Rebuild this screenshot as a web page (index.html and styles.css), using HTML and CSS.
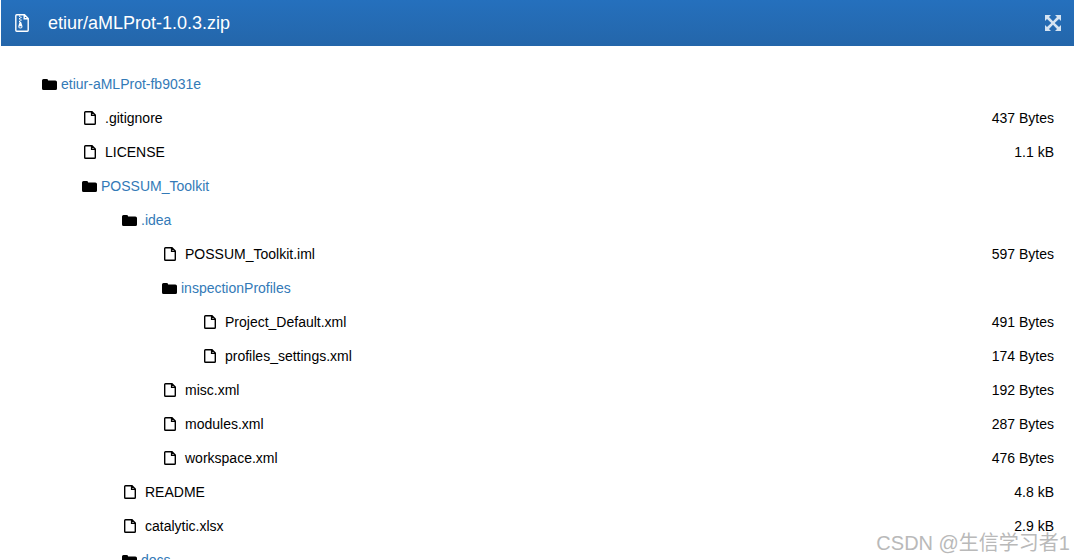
FILE: index.html
```
<!DOCTYPE html>
<html lang="en">
<head>
  <meta charset="UTF-8">
  <title>etiur/aMLProt-1.0.3.zip</title>
  <link rel="stylesheet" href="styles.css">
</head>
<body>

  <!-- ICONS -->
  <svg class="sprite" aria-hidden="true">
    <symbol id="icon-folder" viewBox="0 0 15 11">
      <path d="M0 1.500Q0 0 1.500 0H4.500Q6 0 6.200 1.400H13.300Q15 1.400 15 3V9.500Q15 11 13.500 11H1.500Q0 11 0 9.500Z" fill="currentColor"/>
    </symbol>
    <symbol id="icon-file" viewBox="0 0 12 14">
      <path d="M1.500 .7H8L11.300 4V12.500Q11.300 13.300 10.500 13.300H1.500Q.7 13.300 .7 12.500V1.500Q.7 .7 1.500 .7ZM7.600 1V4.400H11" fill="none" stroke="currentColor" stroke-width="1.400"/>
    </symbol>
    <symbol id="icon-zip" viewBox="0 0 14 18">
      <path d="M1.700 .8H9.500L13.200 4.500V16.300Q13.200 17.200 12.300 17.200H1.700Q.8 17.200 .8 16.300V1.700Q.8 .8 1.700 .8ZM9.200 1V4.800H13" fill="none" stroke="currentColor" stroke-width="1.400"/>
      <path d="M4 1.500H5.300V2.800H4ZM5.300 2.800H6.600V4.100H5.300ZM4 4.100H5.300V5.400H4ZM5.300 5.400H6.600V6.700H5.300ZM4 6.700H5.300V8H4Z" fill="currentColor"/>
      <path fill-rule="evenodd" d="M4.600 8H6.100L7.500 12.300Q7.700 14.600 5.400 14.600Q3.100 14.600 3.300 12.300ZM4.400 12.300V13.400H6.400V12.300Z" fill="currentColor"/>
    </symbol>
    <symbol id="icon-expand" viewBox="0 0 16 16">
      <path d="M0 0H6L4 2L8 6.300L12 2L10 0H16V6L14 4L9.700 8L14 12L16 10V16H10L12 14L8 9.700L4 14L6 16H0V10L2 12L6.300 8L2 4L0 6Z" fill="currentColor"/>
    </symbol>
  </svg>

  <header class="header">
    <svg class="zip-icon"><use href="#icon-zip"/></svg>
    <h1>etiur/aMLProt-1.0.3.zip</h1>
    <button class="expand-btn" type="button" aria-label="Fullscreen">
      <svg><use href="#icon-expand"/></svg>
    </button>
  </header>

  <!-- FILE TREE -->
  <main class="preview">
    <ul class="tree">
      <li>
        <div class="row"><svg class="folder-icon"><use href="#icon-folder"/></svg><a href="#">etiur-aMLProt-fb9031e</a></div>
        <ul>
          <li><div class="row"><svg class="file-icon"><use href="#icon-file"/></svg><span>.gitignore</span><span class="size">437 Bytes</span></div></li>
          <li><div class="row"><svg class="file-icon"><use href="#icon-file"/></svg><span>LICENSE</span><span class="size">1.1 kB</span></div></li>
          <li>
            <div class="row"><svg class="folder-icon"><use href="#icon-folder"/></svg><a href="#">POSSUM_Toolkit</a></div>
            <ul>
              <li>
                <div class="row"><svg class="folder-icon"><use href="#icon-folder"/></svg><a href="#">.idea</a></div>
                <ul>
                  <li><div class="row"><svg class="file-icon"><use href="#icon-file"/></svg><span>POSSUM_Toolkit.iml</span><span class="size">597 Bytes</span></div></li>
                  <li>
                    <div class="row"><svg class="folder-icon"><use href="#icon-folder"/></svg><a href="#">inspectionProfiles</a></div>
                    <ul>
                      <li><div class="row"><svg class="file-icon"><use href="#icon-file"/></svg><span>Project_Default.xml</span><span class="size">491 Bytes</span></div></li>
                      <li><div class="row"><svg class="file-icon"><use href="#icon-file"/></svg><span>profiles_settings.xml</span><span class="size">174 Bytes</span></div></li>
                    </ul>
                  </li>
                  <li><div class="row"><svg class="file-icon"><use href="#icon-file"/></svg><span>misc.xml</span><span class="size">192 Bytes</span></div></li>
                  <li><div class="row"><svg class="file-icon"><use href="#icon-file"/></svg><span>modules.xml</span><span class="size">287 Bytes</span></div></li>
                  <li><div class="row"><svg class="file-icon"><use href="#icon-file"/></svg><span>workspace.xml</span><span class="size">476 Bytes</span></div></li>
                </ul>
              </li>
              <li><div class="row"><svg class="file-icon"><use href="#icon-file"/></svg><span>README</span><span class="size">4.8 kB</span></div></li>
              <li><div class="row"><svg class="file-icon"><use href="#icon-file"/></svg><span>catalytic.xlsx</span><span class="size">2.9 kB</span></div></li>
              <li>
                <div class="row"><svg class="folder-icon"><use href="#icon-folder"/></svg><a href="#">docs</a></div>
              </li>
            </ul>
          </li>
        </ul>
      </li>
    </ul>
  </main>

  <div class="watermark">CSDN @生信学习者1</div>

</body>
</html>
```
FILE: styles.css
```
body {
  font-family: "Liberation Sans", Arial, "Noto Sans CJK SC", sans-serif;
  font-size: 14px;
  color: #000;
  background: #fff;
  margin: 0;
  height: 100vh;
  overflow: hidden;
}

.sprite {
  display: none;
}

.header {
  display: flex;
  align-items: center;
  height: 46px;
  margin-left: 1px;
  padding: 0 13px 0 14px;
  box-sizing: border-box;
  background: linear-gradient(#2570bd, #2466aa);
  color: #fff;
}

.header h1 {
  flex: 1;
  margin: 0 0 0 19px;
  font-size: 18px;
  font-weight: 400;
}

.zip-icon {
  width: 14px;
  height: 18px;
}

.expand-btn {
  display: flex;
  padding: 0;
  border: none;
  background: none;
  color: #d5e3f1;
  cursor: pointer;
}

.expand-btn svg {
  width: 16px;
  height: 16px;
}

.preview {
  padding: 21px 20px 0 2px;
}

.tree,
.tree ul {
  list-style: none;
  margin: 0;
  padding: 0 0 0 40px;
}

.row {
  display: flex;
  align-items: center;
  height: 34px;
}

.row a {
  color: #337ab7;
  text-decoration: none;
}

.folder-icon {
  width: 15px;
  height: 11px;
  margin-right: 4px;
}

.file-icon {
  width: 12px;
  height: 14px;
  margin: 0 9px 0 2px;
}

.size {
  margin-left: auto;
}

.watermark {
  position: absolute;
  right: 4px;
  bottom: 2px;
  font-size: 20px;
  line-height: 30px;
  color: #b9b9b9;
}
```
